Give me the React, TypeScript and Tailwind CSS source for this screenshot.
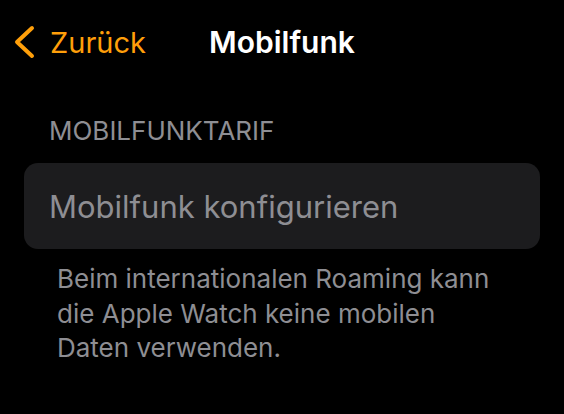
import React from "react";

export default function App() {
  return (
    <div
      className="w-[564px] h-[414px] bg-black overflow-hidden flex flex-col"
      style={{ fontFamily: "Inter, 'Noto Sans', sans-serif" }}
    >
      <div className="grid grid-cols-[1fr_auto_1fr] items-center h-[86px] pb-[2px]">
        <div className="flex items-center pl-[12px] gap-[14px] text-[#ff9f0a]">
          <svg width="24" height="34" viewBox="0 0 24 34" fill="none">
            <path d="M20 3 L5 17 L20 31" stroke="#ff9f0a" strokeWidth="4" strokeLinecap="round" strokeLinejoin="round" />
          </svg>
          <span className="text-[29px] leading-none">Zurück</span>
        </div>
        <div className="text-white text-[30px] font-semibold leading-none">Mobilfunk</div>
        <div />
      </div>
      <div className="pl-[49px] pt-[32px] text-[26px] leading-none text-[#8e8e93] uppercase">Mobilfunktarif</div>
      <div className="mx-[24px] mt-[19px] h-[86px] rounded-[14px] bg-[#1c1c1e] flex items-center pl-[25px]">
        <span className="text-[31px] text-[#8e8e93] leading-none">Mobilfunk konfigurieren</span>
      </div>
      <div className="pl-[57px] w-[505px] pt-[13px] text-[26px] leading-[34.5px] text-[#8e8e93]">
        Beim internationalen Roaming kann die Apple Watch keine mobilen Daten verwenden.
      </div>
    </div>
  );
}
